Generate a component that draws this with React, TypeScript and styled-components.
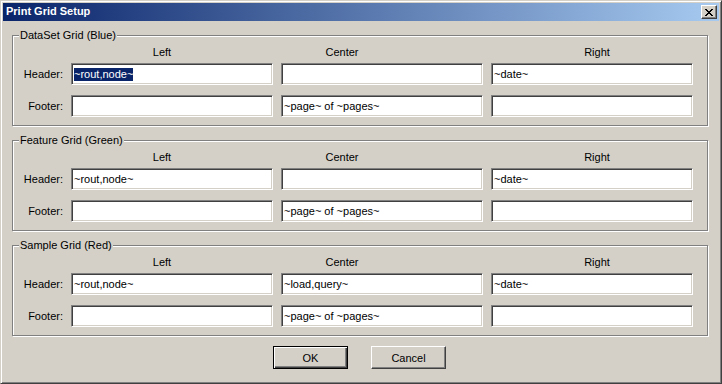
import React from 'react';
import styled, { createGlobalStyle } from 'styled-components';

const GlobalStyle = createGlobalStyle`
    html, body {
        margin: 0;
        padding: 0;
        background: #d4d0c8;
    }
    body {
        font-family: 'Liberation Sans', Arial, sans-serif;
        font-size: 11px;
        color: #000;
    }
`;

const Window = styled.div`
    box-sizing: border-box;
    width: 722px;
    height: 384px;
    padding: 2px;
    background: #d4d0c8;
    border: 1px solid;
    border-color: #d4d0c8 #404040 #404040 #d4d0c8;
    box-shadow: inset 1px 1px 0 #fff, inset -1px -1px 0 #808080;
    display: flex;
    flex-direction: column;
`;

const TitleBar = styled.div`
    height: 18px;
    display: flex;
    align-items: center;
    justify-content: space-between;
    background: linear-gradient(to right, #0a246a, #a6caf0);
    padding: 0 2px 0 3px;
`;

const Title = styled.span`
    color: #fff;
    font-weight: bold;
    font-size: 11px;
    line-height: 13px;
    padding-bottom: 1px;
`;

const CloseButton = styled.button`
    box-sizing: border-box;
    width: 16px;
    height: 14px;
    padding: 0;
    margin: 0;
    background: #d4d0c8;
    border: 1px solid;
    border-color: #fff #404040 #404040 #fff;
    box-shadow: inset -1px -1px 0 #808080;
    display: flex;
    align-items: center;
    justify-content: center;
`;

const Body = styled.div`
    display: flex;
    flex-direction: column;
    gap: 14px;
    padding: 14px 11px 0 9px;
`;

const Group = styled.div`
    position: relative;
    border: 1px solid #808080;
    box-shadow: inset 1px 1px 0 #fff, 1px 1px 0 #fff;
    padding: 10px 14px 8px 0;
`;

const Caption = styled.span`
    position: absolute;
    top: -7px;
    left: 6px;
    padding: 0 1px;
    line-height: 13px;
    background: #d4d0c8;
`;

const Grid = styled.div`
    display: grid;
    grid-template-columns: 50px repeat(3, 202px);
    column-gap: 8px;
    row-gap: 10px;
    align-items: center;
`;

const ColHead = styled.div<{ $shift: number }>`
    text-align: center;
    line-height: 13px;
    margin-bottom: -6px;
    padding-left: ${p => (p.$shift > 0 ? p.$shift * 2 : 0)}px;
    padding-right: ${p => (p.$shift < 0 ? -p.$shift * 2 : 0)}px;
`;

const RowLabel = styled.div`
    text-align: right;
    line-height: 13px;
`;

const Field = styled.div`
    box-sizing: border-box;
    height: 22px;
    background: #fff;
    border: 1px solid;
    border-color: #808080 #fff #fff #808080;
    box-shadow: inset 1px 1px 0 #404040, inset -1px -1px 0 #d4d0c8;
    padding: 0 3px 0 2px;
    display: flex;
    align-items: center;
    white-space: nowrap;
    overflow: hidden;
    line-height: 13px;
`;

const Selected = styled.span`
    background: #0a246a;
    color: #fff;
`;

const ButtonRow = styled.div`
    display: flex;
    justify-content: center;
    gap: 23px;
    padding: 10px 3px 0 0;
`;

const Button = styled.button<{ $default?: boolean }>`
    box-sizing: border-box;
    width: 75px;
    height: 23px;
    margin: 0;
    padding: 0;
    font-family: inherit;
    font-size: 11px;
    color: #000;
    background: #d4d0c8;
    border: 1px solid;
    border-color: ${p => (p.$default ? '#000' : '#fff #404040 #404040 #fff')};
    box-shadow: ${p =>
        p.$default
            ? 'inset 1px 1px 0 #fff, inset -1px -1px 0 #404040, inset -2px -2px 0 #808080'
            : 'inset -1px -1px 0 #808080'};
`;

const columns = [
    { name: 'Left', shift: -10 },
    { name: 'Center', shift: -40 },
    { name: 'Right', shift: 5 },
];

const grids = [
    {
        title: 'DataSet Grid (Blue)',
        header: ['~rout,node~', '', '~date~'],
        footer: ['', '~page~ of ~pages~', ''],
        selectFirst: true,
    },
    {
        title: 'Feature Grid (Green)',
        header: ['~rout,node~', '', '~date~'],
        footer: ['', '~page~ of ~pages~', ''],
    },
    {
        title: 'Sample Grid (Red)',
        header: ['~rout,node~', '~load,query~', '~date~'],
        footer: ['', '~page~ of ~pages~', ''],
    },
];

const CloseIcon = () => (
    <svg width="8" height="7" viewBox="0 0 8 7" shapeRendering="crispEdges">
        <path
            d="M0 0h2v1h-2zM6 0h2v1h-2zM1 1h2v1h-2zM5 1h2v1h-2zM2 2h4v1h-4zM3 3h2v1h-2zM2 4h4v1h-4zM1 5h2v1h-2zM5 5h2v1h-2zM0 6h2v1h-2zM6 6h2v1h-2z"
            fill="#000"
        />
    </svg>
);

const GridSetup = ({ grid }: { grid: (typeof grids)[number] }) => (
    <Group>
        <Caption>{grid.title}</Caption>
        <Grid>
            <div />
            {columns.map(col => (
                <ColHead key={col.name} $shift={col.shift}>
                    {col.name}
                </ColHead>
            ))}
            <RowLabel>Header:</RowLabel>
            {grid.header.map((value, i) => (
                <Field key={'h' + i}>
                    {grid.selectFirst && i === 0 ? <Selected>{value}</Selected> : value}
                </Field>
            ))}
            <RowLabel>Footer:</RowLabel>
            {grid.footer.map((value, i) => (
                <Field key={'f' + i}>{value}</Field>
            ))}
        </Grid>
    </Group>
);

const App = () => {
    return (
        <>
            <GlobalStyle />
            <Window>
                <TitleBar>
                    <Title>Print Grid Setup</Title>
                    <CloseButton>
                        <CloseIcon />
                    </CloseButton>
                </TitleBar>
                <Body>
                    {grids.map(grid => (
                        <GridSetup key={grid.title} grid={grid} />
                    ))}
                </Body>
                <ButtonRow>
                    <Button $default>OK</Button>
                    <Button>Cancel</Button>
                </ButtonRow>
            </Window>
        </>
    );
};

export default App;
